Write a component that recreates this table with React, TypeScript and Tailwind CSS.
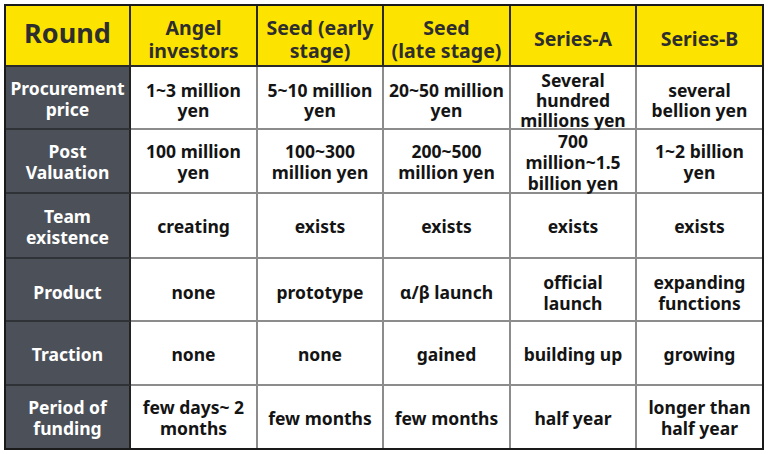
import React from "react";

const header: React.ReactNode[] = [
  <>Angel<br />investors</>,
  <>Seed (early<br />stage)</>,
  <>Seed<br />(late stage)</>,
  <>Series-A</>,
  <>Series-B</>,
];

const rowPad = ["pt-[4px] leading-[20px]", "pt-[2px] leading-[21px]", "pt-[2px] leading-[21px]", "pt-[6px] leading-[21px]", "pt-[3px] leading-[21px]", "pt-[2px] leading-[21px]"];

const rows: { label: React.ReactNode; cells: React.ReactNode[] }[] = [
  {
    label: <>Procurement<br />price</>,
    cells: [
      <>1~3 million<br />yen</>,
      <>5~10 million<br />yen</>,
      <>20~50 million<br />yen</>,
      <>Several<br />hundred<br />millions yen</>,
      <>several<br />bellion yen</>,
    ],
  },
  {
    label: <>Post<br />Valuation</>,
    cells: [
      <>100 million<br />yen</>,
      <>100~300<br />million yen</>,
      <>200~500<br />million yen</>,
      <>700<br />million~1.5<br />billion yen</>,
      <>1~2 billion<br />yen</>,
    ],
  },
  {
    label: <>Team<br />existence</>,
    cells: [<>creating</>, <>exists</>, <>exists</>, <>exists</>, <>exists</>],
  },
  {
    label: <>Product</>,
    cells: [
      <>none</>,
      <>prototype</>,
      <>α/β launch</>,
      <>official<br />launch</>,
      <>expanding<br />functions</>,
    ],
  },
  {
    label: <>Traction</>,
    cells: [<>none</>, <>none</>, <>gained</>, <>building up</>, <>growing</>],
  },
  {
    label: <>Period of<br />funding</>,
    cells: [
      <>few days~ 2<br />months</>,
      <>few months</>,
      <>few months</>,
      <>half year</>,
      <>longer than<br />half year</>,
    ],
  },
];

export default function App() {
  return (
    <div
      className="w-[768px] h-[454px] bg-white pt-1 pl-1"
      style={{ fontFamily: '"Noto Sans", "Open Sans", sans-serif' }}
    >
      <div className="w-[760px] h-[446px] border-2 border-[#1a1a1a] grid grid-cols-[125px_127px_126px_127px_126px_125px] grid-rows-[61px_63px_64px_65px_63px_64px_62px] font-bold text-center">
        <div className="bg-[#fde400] border-r-2 border-b-2 border-[#2a2a2a] flex items-center justify-center text-[27px] leading-none text-[#2e2e2e] pb-[6px]">
          Round
        </div>
        {header.map((h, i) => (
          <div
            key={i}
            className={`bg-[#fde400] border-b-2 border-[#2a2a2a] ${i < 4 ? "border-r-2" : ""} flex items-center justify-center text-[19.5px] leading-[23px] text-[#2e2e2e] pt-[6px]`}
          >
            <div>{h}</div>
          </div>
        ))}
        {rows.map((r, ri) => (
          <React.Fragment key={ri}>
            <div
              className={`bg-[#4c5159] border-r-2 border-[#222] ${ri < 5 ? "border-b-2 border-b-[#2f3237]" : ""} flex items-center justify-center text-[17.5px] leading-[21px] text-white ${ri === 0 ? "pt-[2px]" : ri === 3 ? "pt-[5px]" : "pt-[2px]"}`}
            >
              <div>{r.label}</div>
            </div>
            {r.cells.map((c, ci) => (
              <div
                key={ci}
                className={`bg-white ${ci < 4 ? "border-r-2" : ""} ${ri < 5 ? "border-b-2" : ""} border-[#8c8c8c] flex items-center justify-center text-[17.5px] text-[#141414] ${rowPad[ri]}`}
              >
                <div>{c}</div>
              </div>
            ))}
          </React.Fragment>
        ))}
      </div>
    </div>
  );
}
